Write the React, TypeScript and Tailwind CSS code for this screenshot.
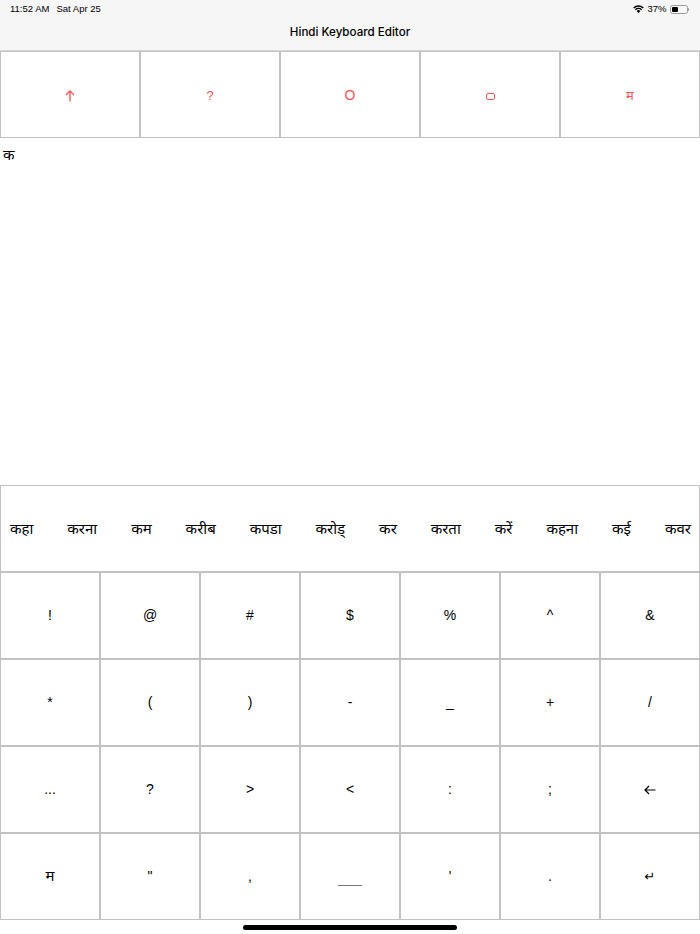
import React from "react";

const font = {
  fontFamily:
    '"Liberation Sans", "Noto Sans", "Noto Sans Devanagari", "Lohit Devanagari", sans-serif',
};

const arrowFont = { fontFamily: '"DejaVu Sans", sans-serif' };

const topKeys = ["↑", "?", "O", "box", "म"];

const words = [
  "कहा",
  "करना",
  "कम",
  "करीब",
  "कपडा",
  "करोड्",
  "कर",
  "करता",
  "करें",
  "कहना",
  "कई",
  "कवर",
];

const rows = [
  ["!", "@", "#", "$", "%", "^", "&"],
  ["*", "(", ")", "-", "_", "+", "/"],
  ["...", "?", ">", "<", ":", ";", "←"],
  ["म", '"', ",", "___", "'", ".", "↵"],
];

function UpArrow() {
  return (
    <svg width="10" height="12" viewBox="0 0 10 12" className="mt-[1px]">
      <path
        d="M5 11.5 V1.2 M1 5 L5 1 L9 5"
        stroke="#ff5252"
        strokeWidth="1.3"
        fill="none"
      />
      <title>↑</title>
    </svg>
  );
}

function LeftArrow() {
  return (
    <svg width="12" height="10" viewBox="0 0 12 10">
      <path
        d="M11.5 5 H1.2 M5 1 L1 5 L5 9"
        stroke="#000"
        strokeWidth="1.2"
        fill="none"
      />
      <title>←</title>
    </svg>
  );
}

function StatusBar() {
  return (
    <div className="bg-[#f6f6f6] h-[51px] border-b border-[#d6d6d6] flex flex-col">
      <div className="flex justify-between items-center h-[17px] px-[10px] pt-[1px] text-[9.5px] text-black">
        <div className="flex gap-[7px]">
          <span>11:52 AM</span>
          <span>Sat Apr 25</span>
        </div>
        <div className="flex items-center gap-[3px] pr-[1px]">
          <svg width="11" height="8" viewBox="0 0 11 8">
            <path d="M5.5 8 L3.6 5.9 A2.8 2.8 0 0 1 7.4 5.9 Z" fill="#000" />
            <path
              d="M2.4 4.7 A4.5 4.5 0 0 1 8.6 4.7"
              stroke="#000"
              strokeWidth="1.4"
              fill="none"
            />
            <path
              d="M0.7 2.9 A7 7 0 0 1 10.3 2.9"
              stroke="#000"
              strokeWidth="1.4"
              fill="none"
            />
          </svg>
          <span>37%</span>
          <div className="flex items-center">
            <div className="w-[18px] h-[9px] border border-[#9a9a9a] rounded-[2.5px] p-[1px]">
              <div className="w-[6px] h-full bg-black rounded-[1px]" />
            </div>
            <div className="w-[1.5px] h-[3px] bg-[#9a9a9a] rounded-r-sm" />
          </div>
        </div>
      </div>
      <div className="flex-1 flex items-center justify-center pb-[2px]">
        <span
          className="text-[11.6px] font-medium text-black"
          style={{ fontFamily: 'Inter, "Liberation Sans", sans-serif' }}
        >
          Hindi Keyboard Editor
        </span>
      </div>
    </div>
  );
}

export default function App() {
  return (
    <div className="w-[700px] h-[934px] bg-white flex flex-col" style={font}>
      <StatusBar />

      <div className="grid grid-cols-5 h-[87px]">
        {topKeys.map((k, i) => (
          <div
            key={i}
            className="border border-[#c2c2c2] flex items-center justify-center text-[#ff5252] text-[13px] pt-[2px]"
          >
            {k === "box" ? (
              <div className="w-[9px] h-[7px] border border-[#ff5252] rounded-[2px] mt-[2px]" />
            ) : k === "↑" ? (
              <UpArrow />
            ) : (
              <span className={k === "O" ? "text-[14px]" : ""}>{k}</span>
            )}
          </div>
        ))}
      </div>

      <div className="flex-1 px-[3px] pt-[5px]">
        <span className="text-[15px] text-black">क</span>
      </div>

      <div className="h-[87px] border border-[#c2c2c2] flex items-center justify-between pl-[9px] pr-[8px] pt-[2px] text-[15px] text-black">
        {words.map((w) => (
          <span key={w}>{w}</span>
        ))}
      </div>

      <div className="grid grid-cols-7">
        {rows.map((row, r) =>
          row.map((k, c) => (
            <div
              key={r + "-" + c}
              className="h-[87px] border border-[#c2c2c2] flex items-center justify-center text-[14px] text-black"
            >
              {k === "___" ? (
                <span className="text-[#777] text-[14px] mt-[4px]">___</span>
              ) : k === "←" ? (
                <LeftArrow />
              ) : k === "↵" ? (
                <span className="text-[13px]" style={arrowFont}>
                  {k}
                </span>
              ) : k === "म" ? (
                <span className="text-[15px]">{k}</span>
              ) : (
                <span>{k}</span>
              )}
            </div>
          ))
        )}
      </div>

      <div className="h-[14px] flex items-center justify-center">
        <div className="w-[214px] h-[5px] rounded-full bg-black" />
      </div>
    </div>
  );
}
